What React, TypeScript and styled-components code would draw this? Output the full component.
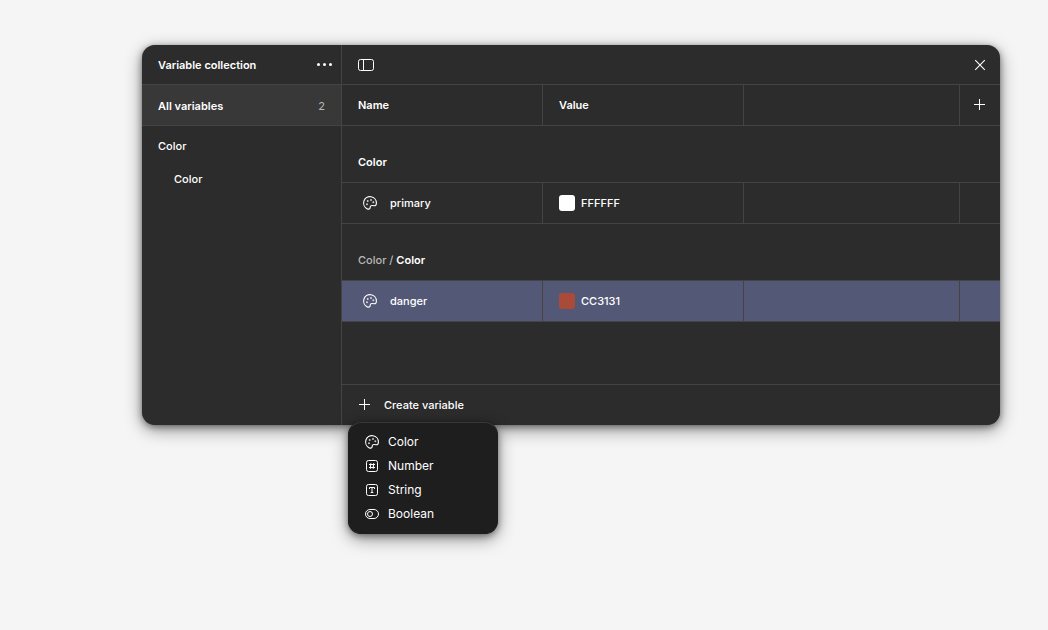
import React from "react";
import styled, { createGlobalStyle, css } from "styled-components";

const GlobalStyle = createGlobalStyle`
  *, *::before, *::after { box-sizing: border-box; }
  body {
    margin: 0;
    background: #f5f5f5;
    color: #fff;
    font: 500 11px/16px Inter, "Liberation Sans", sans-serif;
    -webkit-font-smoothing: antialiased;
  }
  button {
    margin: 0;
    padding: 0;
    border: 0;
    background: none;
    color: inherit;
    font: inherit;
    text-align: left;
    cursor: pointer;
  }
  svg { display: block; flex: none; }
`;

const line = "1px solid #444";

const shadow = "0 0 1px rgba(0, 0, 0, 0.3), 0 5px 17px rgba(0, 0, 0, 0.4), 0 2px 7px rgba(0, 0, 0, 0.4)";

const Page = styled.main`
  min-height: 100vh;
  padding: 45px 48px 45px 142px;
`;

const Panel = styled.section`
  display: grid;
  grid-template-columns: 200px minmax(0, 1fr);
  min-height: 380px;
  border-radius: 13px;
  background: #2c2c2c;
  box-shadow: ${shadow};
`;

const Sidebar = styled.aside`
  border-right: ${line};
`;

const Bar = styled.header`
  display: flex;
  align-items: center;
  justify-content: space-between;
  height: 40px;
  padding: 0 8px 0 16px;
  border-bottom: ${line};
`;

const Title = styled.h1`
  margin: 0;
  font-size: 11px;
  font-weight: 600;
`;

const IconButton = styled.button`
  display: inline-flex;
  align-items: center;
  justify-content: center;
  width: 16px;
  height: 24px;
  vertical-align: middle;
`;

const CloseButton = styled(IconButton)`
  margin-right: 4px;
`;

const AllVariables = styled.button`
  display: flex;
  align-items: center;
  justify-content: space-between;
  width: 100%;
  height: 41px;
  padding: 2px 16px 0;
  border-bottom: ${line};
  background: #383838;
  font-weight: 600;
`;

const Count = styled.span`
  color: #b8b8b8;
  font-weight: 400;
`;

const Groups = styled.nav`
  display: flex;
  flex-direction: column;
  padding-top: 3px;
`;

const GroupButton = styled.button<{ $level: number }>`
  height: 33px;
  padding-left: ${({ $level }) => 16 + $level * 16}px;
`;

const Main = styled.div`
  display: flex;
  flex-direction: column;
  min-width: 0;
`;

const Table = styled.table`
  width: 100%;
  table-layout: fixed;
  border-collapse: separate;
  border-spacing: 0;
`;

const Col = styled.col<{ $width?: number }>`
  ${({ $width }) => $width && css`width: ${$width}px;`}
`;

const Row = styled.tr<{ $selected?: boolean }>`
  background: ${({ $selected }) => ($selected ? "#545877" : "transparent")};
`;

const cell = css`
  height: 41px;
  padding: 0 16px;
  border-right: ${line};
  border-bottom: ${line};
  text-align: left;
  vertical-align: middle;
  &:last-child {
    padding: 0 12px 0 11px;
    border-right: 0;
  }
`;

const HeadCell = styled.th`
  ${cell}
  font-weight: 600;
`;

const Cell = styled.td`
  ${cell}
`;

const GroupCell = styled.th`
  height: 57px;
  padding: 16px 16px 0;
  border-bottom: ${line};
  font-weight: 600;
  text-align: left;
  vertical-align: middle;
`;

const Muted = styled.span`
  color: #b8b8b8;
  font-weight: 500;
`;

const NameBox = styled.div`
  display: flex;
  align-items: center;
  gap: 12px;
  padding-left: 4px;
`;

const ValueBox = styled.div`
  display: flex;
  align-items: center;
  gap: 6px;
`;

const Swatch = styled.span<{ $color: string }>`
  width: 16px;
  height: 16px;
  border-radius: 3px;
  background: ${({ $color }) => $color};
`;

const Footer = styled.footer`
  position: relative;
  height: 41px;
  margin-top: auto;
  border-top: ${line};
`;

const CreateButton = styled.button`
  display: flex;
  align-items: center;
  gap: 11px;
  width: 100%;
  height: 40px;
  padding: 0 14px;
`;

const Menu = styled.div`
  position: absolute;
  top: 37px;
  left: 6px;
  width: 150px;
  padding: 7px 0;
  border: 1px solid #1e1e1e;
  border-top-color: #383838;
  border-radius: 13px;
  background: #1e1e1e;
  box-shadow: ${shadow};
`;

const MenuItem = styled.button`
  display: flex;
  align-items: center;
  gap: 8px;
  width: 100%;
  height: 24px;
  padding: 0 15px;
  font-size: 12px;
  font-weight: 400;
`;

const Stroke = styled.svg`
  fill: none;
  stroke: currentColor;
  stroke-width: 1;
`;

const Palette = () => (
  <Stroke width="16" height="16" viewBox="0 0 16 16" aria-hidden="true">
    <path d="M14.4 8A6.4 6.4 0 1 0 5 13.7C6.8 14.7 8.1 14 8.2 12.4C8.3 10.9 9 10.3 10.3 10.5L12.1 10.8C13.7 10.9 14.4 9.8 14.4 8Z" strokeWidth="1.1" />
    <g fill="currentColor" stroke="none" opacity="0.75">
      <circle cx="5.7" cy="6" r="1" />
      <circle cx="9" cy="4.9" r="1" />
      <circle cx="11.3" cy="7.3" r="1" />
      <circle cx="5" cy="9.3" r="1" />
    </g>
  </Stroke>
);

const NumberIcon = () => (
  <Stroke width="16" height="16" viewBox="0 0 16 16" aria-hidden="true">
    <rect x="2.5" y="2.5" width="11" height="11" rx="2" />
    <path d="M6.8 5.2L6.4 10.8M9.6 5.2L9.2 10.8M5 6.5H11M5 9.5H11" />
  </Stroke>
);

const StringIcon = () => (
  <Stroke width="16" height="16" viewBox="0 0 16 16" aria-hidden="true">
    <rect x="2.5" y="2.5" width="11" height="11" rx="2" />
    <path d="M5.5 7V5.5H10.5V7M8 5.5V10.5M6.7 10.5H9.3" />
  </Stroke>
);

const BooleanIcon = () => (
  <Stroke width="16" height="16" viewBox="0 0 16 16" aria-hidden="true">
    <rect x="1.5" y="3.5" width="13" height="9" rx="4.5" />
    <circle cx="6" cy="8" r="2.5" />
  </Stroke>
);

const Plus = () => (
  <Stroke width="17" height="16" viewBox="0 0 17 16" aria-hidden="true">
    <path d="M3 7.5H14M8.5 2V13" />
  </Stroke>
);

const Close = () => (
  <Stroke width="16" height="16" viewBox="0 0 16 16" aria-hidden="true">
    <path d="M3.2 3.2L12.8 12.8M12.8 3.2L3.2 12.8" strokeWidth="1.1" />
  </Stroke>
);

const More = () => (
  <svg width="16" height="16" viewBox="0 0 16 16" fill="currentColor" aria-hidden="true">
    <circle cx="1.5" cy="7.5" r="1.5" />
    <circle cx="7.5" cy="7.5" r="1.5" />
    <circle cx="13.5" cy="7.5" r="1.5" />
  </svg>
);

const SidebarIcon = () => (
  <Stroke width="16" height="16" viewBox="0 0 16 16" aria-hidden="true">
    <rect x="0.5" y="2.5" width="15" height="11" rx="2" />
    <path d="M5.5 2.5V13.5" />
  </Stroke>
);

type Variable = { name: string; hex: string; color: string; selected?: boolean };

const groups: { parent?: string; title: string; items: Variable[] }[] = [
  { title: "Color", items: [{ name: "primary", hex: "FFFFFF", color: "#fff" }] },
  {
    parent: "Color",
    title: "Color",
    items: [{ name: "danger", hex: "CC3131", color: "#a94b38", selected: true }],
  },
];

const types = [
  { label: "Color", Icon: Palette },
  { label: "Number", Icon: NumberIcon },
  { label: "String", Icon: StringIcon },
  { label: "Boolean", Icon: BooleanIcon },
];

export default function App() {
  return (
    <>
      <GlobalStyle />
      <Page>
        <Panel>
          <Sidebar>
            <Bar>
              <Title>Variable collection</Title>
              <IconButton type="button" aria-label="More options">
                <More />
              </IconButton>
            </Bar>
            <AllVariables type="button">
              All variables <Count>2</Count>
            </AllVariables>
            <Groups>
              <GroupButton type="button" $level={0}>Color</GroupButton>
              <GroupButton type="button" $level={1}>Color</GroupButton>
            </Groups>
          </Sidebar>
          <Main>
            <Bar>
              <IconButton type="button" aria-label="Toggle sidebar">
                <SidebarIcon />
              </IconButton>
              <CloseButton type="button" aria-label="Close">
                <Close />
              </CloseButton>
            </Bar>
            <Table>
              <colgroup>
                <Col $width={201} />
                <Col $width={201} />
                <Col />
                <Col $width={40} />
              </colgroup>
              <thead>
                <Row>
                  <HeadCell scope="col">Name</HeadCell>
                  <HeadCell scope="col">Value</HeadCell>
                  <HeadCell />
                  <HeadCell>
                    <IconButton type="button" aria-label="Add mode">
                      <Plus />
                    </IconButton>
                  </HeadCell>
                </Row>
              </thead>
              {groups.map((group, index) => (
                <tbody key={index}>
                  <Row>
                    <GroupCell colSpan={4} scope="colgroup">
                      {group.parent && <Muted>{group.parent} / </Muted>}
                      {group.title}
                    </GroupCell>
                  </Row>
                  {group.items.map((item) => (
                    <Row key={item.name} $selected={item.selected}>
                      <Cell>
                        <NameBox>
                          <Palette />
                          {item.name}
                        </NameBox>
                      </Cell>
                      <Cell>
                        <ValueBox>
                          <Swatch $color={item.color} />
                          {item.hex}
                        </ValueBox>
                      </Cell>
                      <Cell />
                      <Cell />
                    </Row>
                  ))}
                </tbody>
              ))}
            </Table>
            <Footer>
              <CreateButton type="button" aria-haspopup="menu" aria-expanded="true">
                <Plus />
                Create variable
              </CreateButton>
              <Menu role="menu">
                {types.map(({ label, Icon }) => (
                  <MenuItem key={label} type="button" role="menuitem">
                    <Icon />
                    {label}
                  </MenuItem>
                ))}
              </Menu>
            </Footer>
          </Main>
        </Panel>
      </Page>
    </>
  );
}
